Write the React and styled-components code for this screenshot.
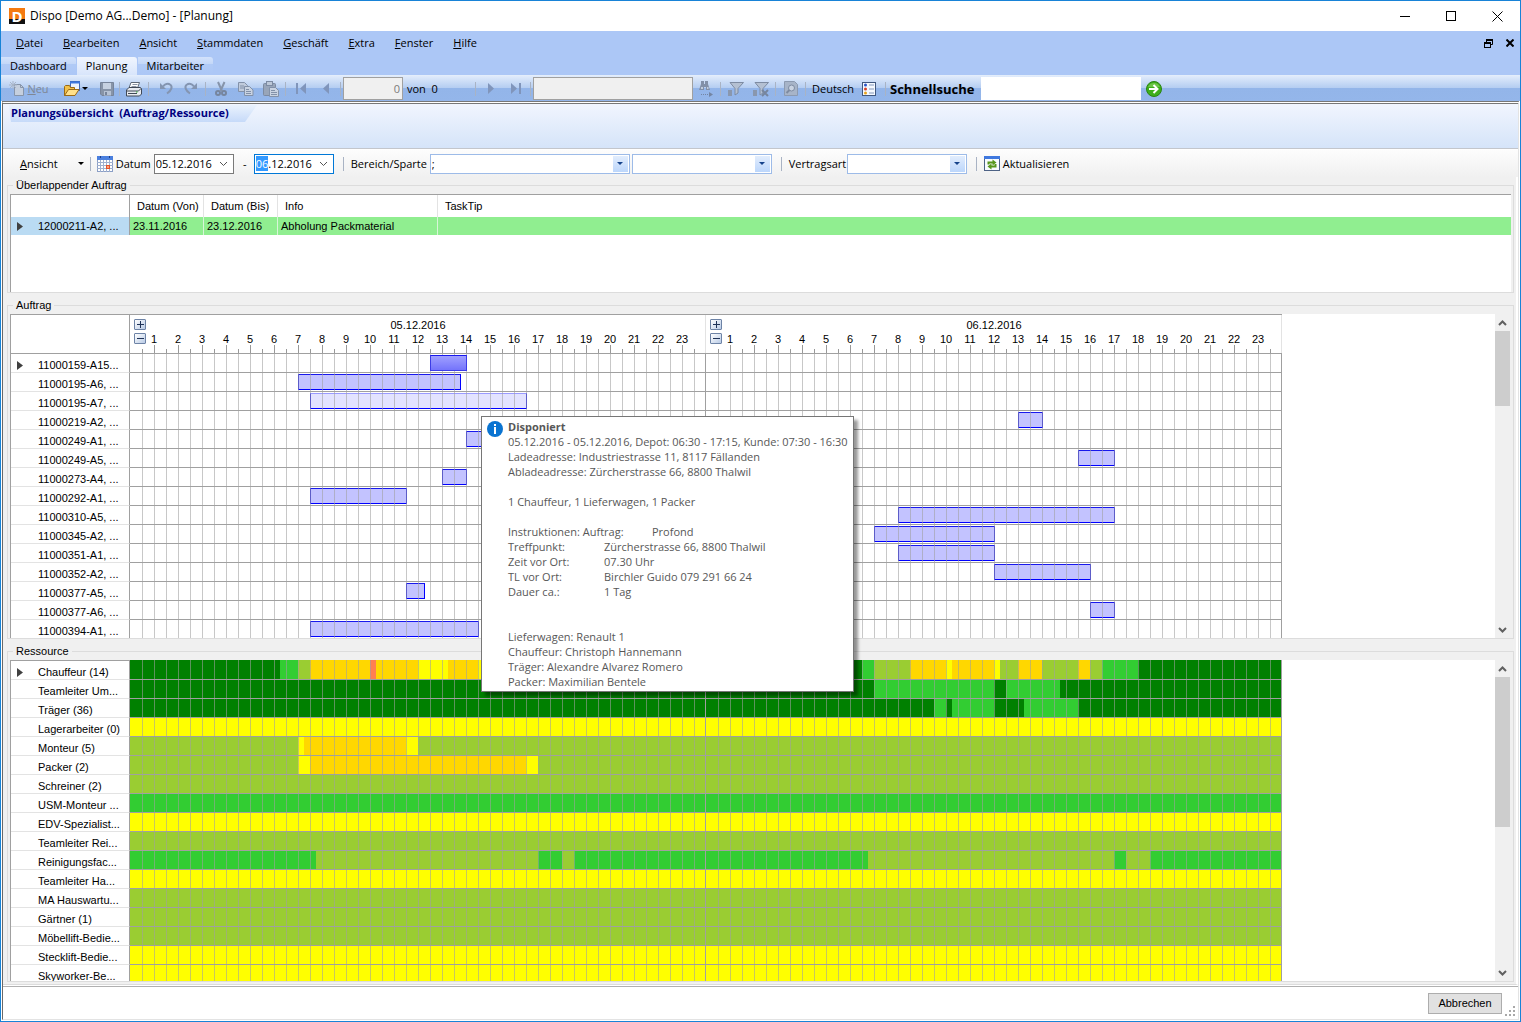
import { useEffect, useRef } from "react";
import styled, { createGlobalStyle } from "styled-components";

const HOUR = 24;

const uiFont = `"Open Sans", "Noto Sans", sans-serif`;
const gridFont = `"Liberation Sans", Arial, sans-serif`;

const levels = {
  dark: "#008000",
  lime: "#32cd32",
  olive: "#9acd32",
  gold: "#ffd700",
  yellow: "#ffff00",
  coral: "#ff7f50",
};

const menuItems = ["Datei", "Bearbeiten", "Ansicht", "Stammdaten", "Geschäft", "Extra", "Fenster", "Hilfe"];

const orders = [
  { name: "11000159-A15...", start: 12.5, end: 14, kind: "selected" },
  { name: "11000195-A6, ...", start: 7, end: 13.75 },
  { name: "11000195-A7, ...", start: 7.5, end: 16.5, kind: "light" },
  { name: "11000219-A2, ...", start: 37, end: 38 },
  { name: "11000249-A1, ...", start: 14, end: 16 },
  { name: "11000249-A5, ...", start: 39.5, end: 41 },
  { name: "11000273-A4, ...", start: 13, end: 14 },
  { name: "11000292-A1, ...", start: 7.5, end: 11.5 },
  { name: "11000310-A5, ...", start: 32, end: 41 },
  { name: "11000345-A2, ...", start: 31, end: 36 },
  { name: "11000351-A1, ...", start: 32, end: 36 },
  { name: "11000352-A2, ...", start: 36, end: 40 },
  { name: "11000377-A5, ...", start: 11.5, end: 12.25 },
  { name: "11000377-A6, ...", start: 40, end: 41 },
  { name: "11000394-A1, ...", start: 7.5, end: 14.5 },
];

// each load entry is [level, hour at which it ends]
const resources = [
  {
    name: "Chauffeur (14)",
    load: [
      ["dark", 6.25], ["lime", 7], ["olive", 7.5], ["gold", 10], ["coral", 10.25], ["gold", 12],
      ["yellow", 13.25], ["gold", 14.5], ["yellow", 17], ["dark", 30.5], ["lime", 31], ["olive", 32.5],
      ["gold", 34], ["yellow", 34.25], ["gold", 36], ["yellow", 36.25], ["olive", 37], ["gold", 38],
      ["olive", 39.5], ["gold", 40], ["olive", 40.5], ["lime", 42], ["dark", 48],
    ],
  },
  { name: "Teamleiter Um...", load: [["dark", 31], ["lime", 36], ["dark", 36.5], ["lime", 38.75], ["dark", 48]] },
  {
    name: "Träger (36)",
    load: [["dark", 33.5], ["lime", 34], ["dark", 34.25], ["lime", 36], ["dark", 37.25], ["lime", 39.5], ["dark", 48]],
  },
  { name: "Lagerarbeiter (0)", load: [["yellow", 48]] },
  { name: "Monteur (5)", load: [["olive", 7], ["yellow", 7.25], ["gold", 11.5], ["yellow", 12], ["olive", 48]] },
  { name: "Packer (2)", load: [["olive", 7], ["yellow", 7.5], ["gold", 16.5], ["yellow", 17], ["olive", 48]] },
  { name: "Schreiner (2)", load: [["olive", 48]] },
  { name: "USM-Monteur ...", load: [["lime", 48]] },
  { name: "EDV-Spezialist...", load: [["yellow", 48]] },
  { name: "Teamleiter Rei...", load: [["olive", 48]] },
  {
    name: "Reinigungsfac...",
    load: [
      ["lime", 7.75], ["olive", 17], ["lime", 18], ["olive", 18.5], ["lime", 30.75],
      ["olive", 41], ["lime", 41.5], ["olive", 42.5], ["lime", 48],
    ],
  },
  { name: "Teamleiter Ha...", load: [["yellow", 48]] },
  { name: "MA Hauswartu...", load: [["olive", 48]] },
  { name: "Gärtner (1)", load: [["olive", 48]] },
  { name: "Möbellift-Bedie...", load: [["olive", 48]] },
  { name: "Stecklift-Bedie...", load: [["yellow", 48]] },
  { name: "Skyworker-Be...", load: [["yellow", 48]] },
];

const tipLines = [
  "05.12.2016 - 05.12.2016, Depot: 06:30 - 17:15, Kunde: 07:30 - 16:30",
  "Ladeadresse: Industriestrasse 11, 8117 Fällanden",
  "Abladeadresse: Zürcherstrasse 66, 8800 Thalwil",
  "",
  "1 Chauffeur, 1 Lieferwagen, 1 Packer",
  "",
  "Instruktionen: Auftrag:\tProfond",
  "Treffpunkt:\tZürcherstrasse 66, 8800 Thalwil",
  "Zeit vor Ort:\t07.30 Uhr",
  "TL vor Ort:\tBirchler Guido 079 291 66 24",
  "Dauer ca.:\t1 Tag",
  "",
  "",
  "Lieferwagen: Renault 1",
  "Chauffeur: Christoph Hannemann",
  "Träger: Alexandre Alvarez Romero",
  "Packer: Maximilian Bentele",
].join("\n");

const GlobalStyle = createGlobalStyle`
  * {
    box-sizing: border-box;
  }

  body {
    margin: 0;
    background: #fff;
    color: #000;
    font: 11px/16px ${uiFont};
  }

  button, input, select {
    font: inherit;
    color: inherit;
    margin: 0;
    padding: 0;
    border: 0;
    border-radius: 0;
    background: none;
    outline: none;
  }

  svg {
    display: block;
    flex: none;
  }
`;

const Window = styled.div`
  display: flex;
  flex-direction: column;
  height: 100vh;
  min-height: 640px;
  overflow: hidden;
  border: 1px solid #1883d7;
`;

/* <--- Title bar ---> */
const TitleBar = styled.header`
  display: flex;
  align-items: center;
  flex: none;
  height: 30px;
  padding-left: 8px;
`;

const Logo = styled.span`
  width: 16px;
  height: 16px;
  margin-right: 5px;
  background: linear-gradient(#f47a10 66%, #111 66%);
  color: #fff;
  font: 700 15px/16px ${uiFont};
  text-align: center;
`;

const Title = styled.h1`
  flex: 1;
  margin: 0;
  font-size: 12px;
  font-weight: 400;
`;

const WindowButton = styled.button`
  display: grid;
  place-items: center;
  width: ${(p) => p.$width || 46}px;
  height: 26px;
`;

/* <--- Menu and tabs ---> */
const MenuBar = styled.nav`
  display: flex;
  align-items: center;
  flex: none;
  height: 26px;
  padding: 0 0 2px 5px;
  background: #acc7f6;
`;

const MenuItem = styled.button`
  padding: 0 10px;
`;

const Spacer = styled.span`
  flex: 1;
`;

const TabBar = styled.div`
  display: flex;
  flex: none;
  gap: 1px;
  height: 18px;
  background: #acc7f6;
`;

const Tab = styled.button`
  height: 18px;
  padding: 0 9px;
  border-radius: 0 3px 0 0;
  background: ${(p) =>
    p.$active ? "linear-gradient(#f0f5fe, #d8e5fb)" : "linear-gradient(#d3e2fb, #c3d7f8 7px, #b0caf6 7px, #acc7f6)"};
`;

/* <--- Tool bar ---> */
const ToolBar = styled.div`
  display: flex;
  align-items: center;
  flex: none;
  height: 26px;
  padding-left: 5px;
  border-top: 1px solid #e3edfb;
  background: linear-gradient(#e0ebfb, #b4cdf1 12px, #93b5e9 12px, #94b6ea);
`;

const ToolButton = styled.button`
  display: flex;
  align-items: center;
  justify-content: center;
  flex: none;
  gap: 2px;
  width: ${(p) => p.$width || 25}px;
  height: 24px;
  color: ${(p) => (p.disabled ? "#7f8795" : "#000")};
`;

const Divider = styled.span`
  flex: none;
  width: 1px;
  height: 14px;
  margin: 0 ${(p) => p.$space || 2}px;
  background: #a9b3c4;
`;

const ToolText = styled.span`
  flex: none;
  width: ${(p) => p.$width}px;
  padding-left: 4px;
  white-space: pre;
`;

const ToolInput = styled.input`
  width: ${(p) => p.$width}px;
  height: 23px;
  padding: 0 2px;
  border: ${(p) => (p.disabled ? "1px solid #a0a0a0" : "0")};
  background: ${(p) => (p.disabled ? "#f0f0f0" : "#fff")};
  color: #7b7b7b;
  text-align: right;
`;

const QuickLabel = styled.label`
  flex: none;
  width: 91px;
  font-size: 13px;
  font-weight: 700;
`;

/* <--- Client area ---> */
const Client = styled.main`
  position: relative;
  display: flex;
  flex: 1;
  flex-direction: column;
  min-height: 0;
  margin: 0 1px 1px;
  border: 1px solid #e3e3e3;
  border-top: 3px double #777;
  border-left-color: #696969;
`;

const PanelHeader = styled.div`
  flex: none;
  height: 45px;
  padding: 1px 0 0 6px;
  border-bottom: 1px solid #c3c6cc;
  background: linear-gradient(#f1f5fe, #d5e4f9);
`;

const PanelTitle = styled.h2`
  width: 248px;
  height: 17px;
  margin: 0;
  padding-left: 2px;
  background: linear-gradient(#eaf2fd, #c6daf9);
  clip-path: polygon(0 0, 100% 0, 236px 100%, 2px 100%);
  color: #00007f;
  font-size: 11px;
  line-height: 16px;
  white-space: pre;
`;

const FilterBar = styled.form`
  display: flex;
  align-items: center;
  flex: none;
  height: 28px;
  padding-left: 17px;
  border-top: 1px solid #fff;
  background: linear-gradient(#fdfdfd, #f0f0f0);
`;

const FilterButton = styled.button`
  display: flex;
  align-items: center;
  gap: ${(p) => p.$gap}px;
`;

const FilterLabel = styled.label`
  display: flex;
  align-items: center;
  flex: none;
  gap: 3px;
  width: ${(p) => p.$width}px;
`;

const Field = styled.span`
  display: flex;
  align-items: center;
  flex: none;
  width: ${(p) => p.$width || 80}px;
  height: 20px;
  margin-right: 2px;
  border: 1px solid ${(p) => p.$color};
  background: #fff;

  input,
  select {
    flex: 1;
    min-width: 0;
    height: 18px;
    padding-left: 1px;
    appearance: none;
  }

  input::selection {
    background: #3399ff;
    color: #fff;
  }
`;

const DateDrop = styled.button`
  display: grid;
  place-items: center;
  width: 18px;
  height: 18px;
`;

const ComboDrop = styled.span`
  display: grid;
  place-items: center;
  width: 15px;
  height: 16px;
  margin-right: 1px;
  background: linear-gradient(#e2edfd, #bcd6fb);
`;

const Dash = styled.span`
  width: 18px;
  text-align: center;
`;

/* <--- Groups ---> */
const Workspace = styled.div`
  display: grid;
  grid-template-rows: 116px minmax(0, 342fr) minmax(0, 339fr);
  gap: 4px;
  flex: 1;
  min-height: 0;
  padding: 0 2px 2px 4px;
  border-right: 2px solid #fff;
  border-bottom: 1px solid #dcdcdc;
  background: #f0f0f0;
  font: 11px/13px ${gridFont};
`;

const Group = styled.fieldset`
  display: flex;
  flex-direction: column;
  min-width: 0;
  min-height: 0;
  margin: 0;
  padding: 1px 2px 0;
  border: 1px solid #dcdcdc;
`;

const Legend = styled.legend`
  height: 16px;
  margin-left: 3px;
  padding: 0 3px;
  line-height: 16px;
`;

const Sheet = styled.div`
  display: flex;
  flex: 1;
  min-height: 0;
  overflow: hidden;
  border-left: 1px solid #a0a0a0;
  background: #fff;
`;

const OverlapTable = styled.table`
  align-self: flex-start;
  width: 100%;
  table-layout: fixed;
  border-collapse: separate;
  border-spacing: 0;
  border-top: 1px solid #a0a0a0;
  text-align: left;
  white-space: nowrap;

  thead th {
    height: 22px;
    padding: 0 0 0 7px;
    border-right: 1px solid #e3e3e3;
    font-weight: 400;
  }

  thead th:first-child {
    border-right-color: #a0a0a0;
  }

  thead th:last-child,
  td:last-child {
    border-right: 0;
  }

  td {
    height: 18px;
    padding: 0 3px;
    border-right: 1px solid #d8f5d8;
    background: #90ee90;
  }

  tbody th {
    padding: 0;
    border-right: 1px solid #a0a0a0;
    background: #badbf3;
    font-weight: 400;
  }
`;

const Col = styled.col`
  width: ${(p) => p.$width}px;
`;

/* <--- Timeline ---> */
const Chart = styled.div`
  flex: 1;
  min-width: 0;
  overflow: hidden;
`;

const ChartRow = styled.div`
  display: flex;
  height: 19px;
`;

const HeadRow = styled(ChartRow)`
  height: 40px;
`;

const RowLabel = styled.div`
  display: flex;
  align-items: center;
  flex: none;
  width: 119px;
  padding: 4px 0 0 6px;
  border-right: 1px solid #a0a0a0;
  border-bottom: 1px solid #e3e3e3;
  white-space: nowrap;
`;

const HeadLabel = styled(RowLabel)`
  border-top: 1px solid #a0a0a0;
  border-bottom-color: #a0a0a0;
`;

const TableLabel = styled.span`
  display: flex;
  align-items: center;
  padding-left: 6px;
`;

const Marker = styled.span`
  display: block;
  width: 21px;
`;

const Track = styled.div`
  position: relative;
  display: flex;
  flex: none;
  width: ${HOUR * 48}px;
  border-bottom: 1px solid #a0a0a0;
`;

const HeadTrack = styled(Track)`
  border-top: 1px solid #a0a0a0;
`;

// half-hour lines are painted over the bars
const DayGrid = styled.span`
  position: absolute;
  top: 0;
  bottom: 0;
  left: ${(p) => p.$day * 24 * HOUR + HOUR / 2}px;
  width: ${24 * HOUR - HOUR / 2}px;
  border-right: 1px solid #a0a0a0;
  background: linear-gradient(to right, rgba(160, 160, 160, 0.58) 1px, transparent 1px) 0 0 / ${HOUR / 2}px 100%;
  pointer-events: none;
`;

const barFill = {
  normal: "#c3c3ff",
  light: "#e3e3ff",
  selected: "linear-gradient(#a0a0ff, #7474fb)",
};

const Bar = styled.div`
  height: 16px;
  margin-top: 1px;
  border: 1px solid ${(p) => (p.$kind === "selected" ? "#3c3ce6" : "#0000ff")};
  border-top-color: ${(p) => (p.$kind === "light" ? "#9a9aff" : "#1818ec")};
  background: ${(p) => barFill[p.$kind]};
  ${(p) => p.$kind === "selected" && "z-index: 1;"}
`;

const Segment = styled.span`
  flex: none;
  background: ${(p) => levels[p.$level]};
`;

const ResourceRow = styled(ChartRow)`
  &:first-child {
    height: 20px;
  }

  &:first-child ${RowLabel} {
    border-top: 1px solid #a0a0a0;
  }
`;

const Day = styled.div`
  width: ${24 * HOUR}px;
  padding-top: 4px;
  border-right: 1px solid #e3e3e3;
`;

const DayLine = styled.div`
  display: flex;
  align-items: flex-start;
  height: ${(p) => p.$height}px;
  padding-left: 4px;
`;

const ZoomButton = styled.button`
  display: grid;
  place-items: center;
  width: 12px;
  height: 11px;
  margin-right: -4px;
  border: 1px solid #6d83a6;
  border-radius: 1px;
  background: linear-gradient(135deg, #fff, #b9cbe6);
`;

const DayName = styled.span`
  flex: 1;
  padding-right: 11px;
  text-align: center;
`;

const Hours = styled.div`
  display: flex;
  flex: 1;
  height: 20px;
  background:
    linear-gradient(to right, #999 1px, transparent 1px) 0 100% / 24px 4px repeat-x,
    linear-gradient(to right, #999 1px, transparent 1px) 12px 100% / 24px 8px repeat-x;
`;

const Hour = styled.span`
  width: ${HOUR}px;
  line-height: 12px;
  text-align: center;
`;

/* <--- Scroll bar ---> */
const ScrollBar = styled.div`
  display: flex;
  flex-direction: column;
  flex: none;
  width: 16px;
  background: #f0f0f0;
`;

const ScrollArrow = styled.button`
  display: grid;
  place-items: center;
  width: 15px;
  height: 17px;
`;

const Thumb = styled.div`
  width: 15px;
  height: ${(p) => p.$size}px;
  margin-bottom: auto;
  background: #cdcdcd;
`;

/* <--- Tooltip ---> */
const Tooltip = styled.div`
  position: absolute;
  z-index: 5;
  top: 312px;
  left: 478px;
  display: flex;
  gap: 4px;
  width: 373px;
  padding: 2px 4px 2px 5px;
  border: 1px solid #767676;
  background: #fff;
  box-shadow: 4px 4px 3px rgba(0, 0, 0, 0.4);
  color: #575757;
  line-height: 15px;

  svg {
    margin-top: 2px;
  }
`;

const TipText = styled.div`
  margin-left: 1px;
  white-space: pre;
  tab-size: 48px;
`;

/* <--- Footer ---> */
const Footer = styled.footer`
  display: flex;
  align-items: flex-end;
  justify-content: flex-end;
  flex: none;
  height: 33px;
  margin-top: 1px;
  padding: 0 2px 2px 0;
  border-top: 1px solid #b0b0b0;
  background: #fff;
`;

const CancelButton = styled.button`
  width: 74px;
  height: 21px;
  margin: 0 3px 3px 0;
  border: 1px solid #adadad;
  background: #e1e1e1;
  font: 11px/13px ${gridFont};
`;

/* <--- Icons ---> */
const Icon = ({ size = 16, children, ...rest }) => (
  <svg width={size} height={size} viewBox={`0 0 ${size} ${size}`} aria-hidden="true" {...rest}>
    {children}
  </svg>
);

const NewIcon = () => (
  <Icon>
    <path d="M5.500 3.500h6l3 3v8h-9z" fill="#c5cfde" stroke="#8795aa" />
    <path d="M11.500 3.500v3h3" fill="none" stroke="#8795aa" />
    <path d="M4 0v8M0 4h8M1 1l6 6M7 1L1 7" stroke="#a9b5c7" />
  </Icon>
);

const FolderIcon = () => (
  <Icon>
    <rect x="6.500" y="0.500" width="9" height="9" fill="#eef4fd" stroke="#4168b4" />
    <path d="M6 1.500h10" stroke="#3f78df" strokeWidth="2" />
    <path d="M0.500 14.500v-9l1-1h4l1 2h4v8z" fill="#f2c14a" stroke="#9b6a16" />
    <path d="M0.500 14.500l4-6h10.500l-4 6z" fill="#ffe08a" stroke="#9b6a16" />
  </Icon>
);

const SaveIcon = () => (
  <Icon>
    <path d="M1.500 1.500h13v13H3l-1.500-1.500z" fill="#8794a8" stroke="#77849a" />
    <rect x="4" y="2" width="8" height="6" fill="#c6d1e1" />
    <rect x="5" y="10" width="7" height="4.500" fill="#b6c2d4" />
    <rect x="6" y="11" width="2" height="3" fill="#77849a" />
  </Icon>
);

const PrintIcon = () => (
  <Icon>
    <path d="M5 1.500h8.500L11.500 7H3z" fill="#fff" stroke="#5e6878" />
    <path d="M6.500 3.500h5M5.500 5.500h5" stroke="#8a93a3" />
    <path d="M0.500 9L3 6.500h11.500l1 1.500v5l-2 2H0.500z" fill="#e7eaf0" stroke="#3f4856" />
    <path d="M1 10h11.500l2.500-2.500" fill="none" stroke="#3f4856" />
    <path d="M2 12.500h9" stroke="#3f4856" />
    <path d="M10 11h1.500" stroke="#2fae2f" />
  </Icon>
);

const UndoIcon = ({ flip }) => (
  <Icon>
    <g transform={flip ? "translate(16 0) scale(-1 1)" : undefined}>
      <path d="M2 2v6h6z" fill="#8495b1" />
      <path d="M5 5.500C7 3 10 2 12 3.500c3 2 1.500 6-3 9" fill="none" stroke="#8495b1" strokeWidth="2" />
    </g>
  </Icon>
);

const CutIcon = () => (
  <Icon>
    <path d="M5 1l4 9M11.500 1l-4 9" stroke="#8694aa" strokeWidth="2" />
    <circle cx="5" cy="12" r="2" fill="none" stroke="#76859d" strokeWidth="2" />
    <circle cx="11" cy="12" r="2" fill="none" stroke="#76859d" strokeWidth="2" />
  </Icon>
);

const CopyIcon = () => (
  <Icon>
    <path d="M0.500 1.500h6l3 3v6h-9z" fill="#c0cbdc" stroke="#8291a9" />
    <path d="M2 5h4M2 7h4" stroke="#8291a9" />
    <path d="M6.500 5.500h5l3.500 3.500v5.500H6.500z" fill="#c9d3e2" stroke="#8291a9" />
    <path d="M8 8.500h3M8 10.500h5M8 12.500h5" stroke="#8291a9" />
  </Icon>
);

const PasteIcon = () => (
  <Icon>
    <rect x="0.500" y="2.500" width="12" height="12" rx="1" fill="#98a5b9" stroke="#7d8ba2" />
    <rect x="3.500" y="0.500" width="6" height="4" fill="#bdc8d8" stroke="#7d8ba2" />
    <path d="M6.500 6.500h6l3 3v6h-9z" fill="#c9d3e2" stroke="#8291a9" />
    <path d="M8 9.500h4M8 11.500h6M8 13.500h6" stroke="#8291a9" />
  </Icon>
);

const StepIcon = ({ end, flip }) => (
  <Icon>
    <g fill="#8095bb" transform={flip ? "translate(16 0) scale(-1 1)" : undefined}>
      <path d={end ? "M13 2v11L7 7.500z" : "M11 2v11L5 7.500z"} />
      {end && <rect x="3" y="2" width="2" height="11" />}
    </g>
  </Icon>
);

const FindIcon = () => (
  <Icon>
    <path d="M3 0h3v3h1V0h3v3l2 6H8V6H6v3H1l2-6z" fill="#8290a8" />
    <path d="M3 7h2M9 7h1.500" stroke="#c2ccdb" strokeWidth="2" />
    <path d="M3 13.500h8" stroke="#7485a3" strokeDasharray="1 1" />
    <path d="M11 11l4 2.500-4 2.500z" fill="#7485a3" />
  </Icon>
);

const FilterIcon = ({ clear }) => (
  <Icon>
    <path d="M2 1.500h13.500L10 7.500V12l-3 2V7.500z" fill="#b4c0d2" stroke="#7d8ba2" />
    <path d="M0 9h4v6H0z" fill="#8997ae" />
    {clear && <path d="M9 9l6 6M15 9l-6 6" stroke="#76859d" strokeWidth="2" />}
  </Icon>
);

const PreviewIcon = () => (
  <Icon>
    <path d="M1.500 0.500h10l3 3v11h-13z" fill="#a7b4c8" stroke="#8c9ab0" />
    <circle cx="8.500" cy="7" r="3" fill="#c9d3e2" stroke="#7d8ba2" />
    <path d="M6.500 9l-3 3" stroke="#7d8ba2" strokeWidth="2" />
  </Icon>
);

const ListIcon = () => (
  <Icon>
    <rect x="1.500" y="1.500" width="13" height="13" fill="#f5f9ff" stroke="#41587f" />
    <circle cx="4.500" cy="4" r="1.500" fill="#2b55c8" />
    <circle cx="4.500" cy="8" r="1.500" fill="#d8402b" />
    <circle cx="4.500" cy="12" r="1.500" fill="#e8a51e" />
    <path d="M8 4h5M8 8h5M8 12h5" stroke="#8498bb" />
  </Icon>
);

const GoIcon = () => (
  <Icon>
    <circle cx="8" cy="8" r="7.500" fill="#3eae1b" stroke="#2a8412" />
    <path d="M2 6a6.500 6.500 0 0 1 12 0z" fill="#8ad566" opacity="0.600" />
    <path d="M3 8h8M7.500 4l4 4-4 4" fill="none" stroke="#fff" strokeWidth="2" />
  </Icon>
);

const CalendarIcon = () => (
  <Icon>
    <rect x="0.500" y="0.500" width="15" height="15" fill="#fff" stroke="#8b9fc6" />
    <rect width="16" height="4" fill="#4a7fde" />
    <path d="M3.500 0v2M12.500 0v2" stroke="#1b3c86" />
    <path d="M3.500 4v12M6.500 4v12M9.500 4v12M12.500 4v12M0 6.500h16M0 9.500h16M0 12.500h16" stroke="#9fb0d0" />
    <rect x="9.500" y="9.500" width="3" height="3" fill="#ff9c7a" stroke="#e2532a" />
  </Icon>
);

const RefreshIcon = () => (
  <Icon>
    <rect x="0.500" y="0.500" width="15" height="14" fill="#f8fbff" stroke="#4d6285" />
    <rect width="16" height="3" fill="#3f78df" />
    <path d="M4.500 8.500V6.500H9M11.500 8v2.500H7" fill="none" stroke="#56961b" strokeWidth="2" />
    <path d="M8.500 3.500l4 3-4 3zM7.500 7.500l-4 3 4 3z" fill="#56961b" />
  </Icon>
);

const InfoIcon = () => (
  <Icon>
    <circle cx="8" cy="8" r="8" fill="#0a74d1" />
    <rect x="7" y="3" width="2" height="2" fill="#fff" />
    <rect x="7" y="6" width="2" height="7" fill="#fff" />
  </Icon>
);

const Caret = ({ color = "#000" }) => (
  <svg width="6" height="3" viewBox="0 0 6 3" aria-hidden="true">
    <path d="M0 0h6L3 3z" fill={color} />
  </svg>
);

const Chevron = ({ up, color = "#606060", width = 2 }) => (
  <svg width="9" height="6" viewBox="0 0 9 6" aria-hidden="true">
    <path d={up ? "M1 5l3.500-3.500L8 5" : "M1 1l3.500 3.500L8 1"} fill="none" stroke={color} strokeWidth={width} />
  </svg>
);

const CurrentRow = () => (
  <svg width="6" height="9" viewBox="0 0 6 9" aria-hidden="true">
    <path d="M0 0l6 4.500L0 9z" fill="#404040" />
  </svg>
);

/* <--- Parts ---> */
const Hot = ({ text }) => (
  <>
    <u>{text[0]}</u>
    {text.slice(1)}
  </>
);

const Combo = ({ id, label, width, value = "" }) => (
  <Field $width={width} $color="#9dbbe8">
    <select id={id} aria-label={label} defaultValue={value}>
      <option>{value}</option>
    </select>
    <ComboDrop>
      <Caret color="#15428b" />
    </ComboDrop>
  </Field>
);

const DateField = ({ id, label, value, inputRef, color }) => (
  <Field $color={color}>
    <input id={id} ref={inputRef} aria-label={label} defaultValue={value} />
    <DateDrop type="button" aria-label="Kalender öffnen">
      <Chevron color="#555" width={1} />
    </DateDrop>
  </Field>
);

const Scroller = ({ size }) => (
  <ScrollBar>
    <ScrollArrow aria-label="Nach oben">
      <Chevron up />
    </ScrollArrow>
    <Thumb $size={size} />
    <ScrollArrow aria-label="Nach unten">
      <Chevron />
    </ScrollArrow>
  </ScrollBar>
);

const DayHeader = ({ date }) => (
  <Day>
    <DayLine $height={14}>
      <ZoomButton aria-label="Vergrössern">
        <svg width="7" height="7" viewBox="0 0 7 7" aria-hidden="true">
          <path d="M0 3.500h7M3.500 0v7" stroke="#1f3358" />
        </svg>
      </ZoomButton>
      <DayName>{date}</DayName>
    </DayLine>
    <DayLine $height={20}>
      <ZoomButton aria-label="Verkleinern">
        <svg width="7" height="7" viewBox="0 0 7 7" aria-hidden="true">
          <path d="M0 3.500h7" stroke="#1f3358" />
        </svg>
      </ZoomButton>
      <Hours>
        {Array.from({ length: 23 }, (_, i) => (
          <Hour key={i}>{i + 1}</Hour>
        ))}
      </Hours>
    </DayLine>
  </Day>
);

const Overlaps = () => (
  <Group>
    <Legend>Überlappender Auftrag</Legend>
    <Sheet>
      <OverlapTable>
        <colgroup>
          <Col $width={119} />
          <Col $width={74} />
          <Col $width={74} />
          <Col $width={160} />
          <col />
        </colgroup>
        <thead>
          <tr>
            <th aria-label="Auftrag" />
            <th>Datum (Von)</th>
            <th>Datum (Bis)</th>
            <th>Info</th>
            <th>TaskTip</th>
          </tr>
        </thead>
        <tbody>
          <tr>
            <th>
              <TableLabel>
                <Marker>
                  <CurrentRow />
                </Marker>
                12000211-A2, ...
              </TableLabel>
            </th>
            <td>23.11.2016</td>
            <td>23.12.2016</td>
            <td>Abholung Packmaterial</td>
            <td />
          </tr>
        </tbody>
      </OverlapTable>
    </Sheet>
  </Group>
);

const Orders = () => (
  <Group>
    <Legend>Auftrag</Legend>
    <Sheet>
      <Chart>
        <HeadRow>
          <HeadLabel />
          <HeadTrack>
            <DayHeader date="05.12.2016" />
            <DayHeader date="06.12.2016" />
          </HeadTrack>
        </HeadRow>
        {orders.map(({ name, start, end, kind = "normal" }, i) => (
          <ChartRow key={name}>
            <RowLabel>
              <Marker>{i === 0 && <CurrentRow />}</Marker>
              {name}
            </RowLabel>
            <Track>
              <Bar $kind={kind} style={{ marginLeft: start * HOUR, width: (end - start) * HOUR + 1 }} />
              <DayGrid $day={0} />
              <DayGrid $day={1} />
            </Track>
          </ChartRow>
        ))}
      </Chart>
      <Scroller size={75} />
    </Sheet>
  </Group>
);

const Resources = () => (
  <Group>
    <Legend>Ressource</Legend>
    <Sheet>
      <Chart>
        {resources.map(({ name, load }, i) => (
          <ResourceRow key={name}>
            <RowLabel>
              <Marker>{i === 0 && <CurrentRow />}</Marker>
              {name}
            </RowLabel>
            <Track>
              {load.map(([level, end], n) => (
                <Segment key={end} $level={level} style={{ width: (end - (n ? load[n - 1][1] : 0)) * HOUR }} />
              ))}
              <DayGrid $day={0} />
              <DayGrid $day={1} />
            </Track>
          </ResourceRow>
        ))}
      </Chart>
      <Scroller size={150} />
    </Sheet>
  </Group>
);

const Tools = () => (
  <ToolBar>
    <ToolButton disabled $width={46}>
      <NewIcon />
      <span>
        <Hot text="Neu" />
      </span>
    </ToolButton>
    <ToolButton $width={47} aria-label="Öffnen">
      <FolderIcon />
      <Caret />
    </ToolButton>
    <ToolButton disabled $width={16} aria-label="Speichern">
      <SaveIcon />
    </ToolButton>
    <Divider $space={4} />
    <ToolButton $width={20} aria-label="Drucken">
      <PrintIcon />
    </ToolButton>
    <Divider $space={4} />
    <ToolButton disabled aria-label="Rückgängig">
      <UndoIcon />
    </ToolButton>
    <ToolButton disabled aria-label="Wiederholen">
      <UndoIcon flip />
    </ToolButton>
    <Divider />
    <ToolButton disabled aria-label="Ausschneiden">
      <CutIcon />
    </ToolButton>
    <ToolButton disabled aria-label="Kopieren">
      <CopyIcon />
    </ToolButton>
    <ToolButton disabled aria-label="Einfügen">
      <PasteIcon />
    </ToolButton>
    <Divider />
    <ToolButton disabled aria-label="Erster Datensatz">
      <StepIcon end />
    </ToolButton>
    <ToolButton disabled aria-label="Vorheriger Datensatz">
      <StepIcon />
    </ToolButton>
    <Divider />
    <ToolInput disabled $width={60} defaultValue="0" aria-label="Datensatz" />
    <ToolText $width={70}>von  0</ToolText>
    <Divider />
    <ToolButton disabled aria-label="Nächster Datensatz">
      <StepIcon flip />
    </ToolButton>
    <ToolButton disabled aria-label="Letzter Datensatz">
      <StepIcon end flip />
    </ToolButton>
    <Divider />
    <ToolInput disabled $width={160} aria-label="Suchtext" />
    <ToolButton disabled aria-label="Suchen">
      <FindIcon />
    </ToolButton>
    <Divider />
    <ToolButton disabled aria-label="Filter">
      <FilterIcon />
    </ToolButton>
    <ToolButton disabled aria-label="Filter entfernen">
      <FilterIcon clear />
    </ToolButton>
    <Divider />
    <ToolButton disabled aria-label="Vorschau">
      <PreviewIcon />
    </ToolButton>
    <Divider />
    <ToolText $width={48}>Deutsch</ToolText>
    <ToolButton aria-label="Liste">
      <ListIcon />
    </ToolButton>
    <Divider $space={4} />
    <QuickLabel htmlFor="quick">Schnellsuche</QuickLabel>
    <ToolInput id="quick" $width={160} />
    <ToolButton aria-label="Suche starten">
      <GoIcon />
    </ToolButton>
  </ToolBar>
);

const Filters = () => {
  const until = useRef(null);

  useEffect(() => {
    until.current.focus();
    until.current.setSelectionRange(0, 2);
  }, []);

  return (
    <FilterBar onSubmit={(e) => e.preventDefault()}>
      <FilterButton type="button" $gap={20}>
        <span>
          <Hot text="Ansicht" />
        </span>
        <Caret />
      </FilterButton>
      <Divider $space={6} />
      <FilterLabel htmlFor="from" $width={57}>
        <CalendarIcon />
        Datum
      </FilterLabel>
      <DateField id="from" value="05.12.2016" color="#7a7a7a" />
      <Dash>-</Dash>
      <DateField label="Datum bis" value="06.12.2016" inputRef={until} color="#0078d7" />
      <Divider $space={7} />
      <FilterLabel htmlFor="area" $width={79}>
        Bereich/Sparte
      </FilterLabel>
      <Combo id="area" width={200} value=";" />
      <Combo label="Sparte" width={140} />
      <Divider $space={7} />
      <FilterLabel htmlFor="contract" $width={58}>
        Vertragsart
      </FilterLabel>
      <Combo id="contract" width={120} />
      <Divider $space={7} />
      <FilterButton type="submit" $gap={3}>
        <RefreshIcon />
        Aktualisieren
      </FilterButton>
    </FilterBar>
  );
};

const App = () => {
  return (
    <>
      <GlobalStyle />
      <Window>
        <TitleBar>
          <Logo aria-hidden="true">D</Logo>
          <Title>Dispo [Demo AG...Demo] - [Planung]</Title>
          <WindowButton aria-label="Minimieren">
            <Icon size={11}>
              <path d="M0 5.500h10" stroke="#000" />
            </Icon>
          </WindowButton>
          <WindowButton aria-label="Maximieren">
            <Icon size={11}>
              <rect x="0.500" y="0.500" width="9" height="9" fill="none" stroke="#000" />
            </Icon>
          </WindowButton>
          <WindowButton aria-label="Schliessen">
            <Icon size={11}>
              <path d="M0.500 0.500l10 10M10.500 0.500l-10 10" stroke="#000" />
            </Icon>
          </WindowButton>
        </TitleBar>

        <MenuBar>
          {menuItems.map((item) => (
            <MenuItem key={item}>
              <Hot text={item} />
            </MenuItem>
          ))}
          <Spacer />
          <WindowButton $width={21} aria-label="Wiederherstellen">
            <Icon size={9}>
              <path d="M2.500 3V0.500h6v5H6" fill="none" stroke="#000" />
              <path d="M2 1h7M0 4h7" stroke="#000" strokeWidth="2" />
              <rect x="0.500" y="3.500" width="6" height="5" fill="none" stroke="#000" />
            </Icon>
          </WindowButton>
          <WindowButton $width={21} aria-label="Planung schliessen">
            <Icon size={8}>
              <path d="M0.500 0.500l7 7M7.500 0.500l-7 7" stroke="#000" strokeWidth="2" />
            </Icon>
          </WindowButton>
        </MenuBar>

        <TabBar>
          <Tab>Dashboard</Tab>
          <Tab $active>Planung</Tab>
          <Tab>Mitarbeiter</Tab>
        </TabBar>

        <Tools />

        <Client>
          <PanelHeader>
            <PanelTitle>Planungsübersicht  (Auftrag/Ressource)</PanelTitle>
          </PanelHeader>
          <Filters />
          <Workspace>
            <Overlaps />
            <Orders />
            <Resources />
          </Workspace>
          <Footer>
            <CancelButton>Abbrechen</CancelButton>
            <Icon size={11}>
              <path d="M8 0h2v2H8zM4 4h2v2H4zM8 4h2v2H8zM0 8h2v2H0zM4 8h2v2H4zM8 8h2v2H8z" fill="#a8a8a8" />
            </Icon>
          </Footer>
          <Tooltip role="tooltip">
            <InfoIcon />
            <TipText>
              <b>Disponiert</b>
              {"\n" + tipLines}
            </TipText>
          </Tooltip>
        </Client>
      </Window>
    </>
  );
};

export default App;
